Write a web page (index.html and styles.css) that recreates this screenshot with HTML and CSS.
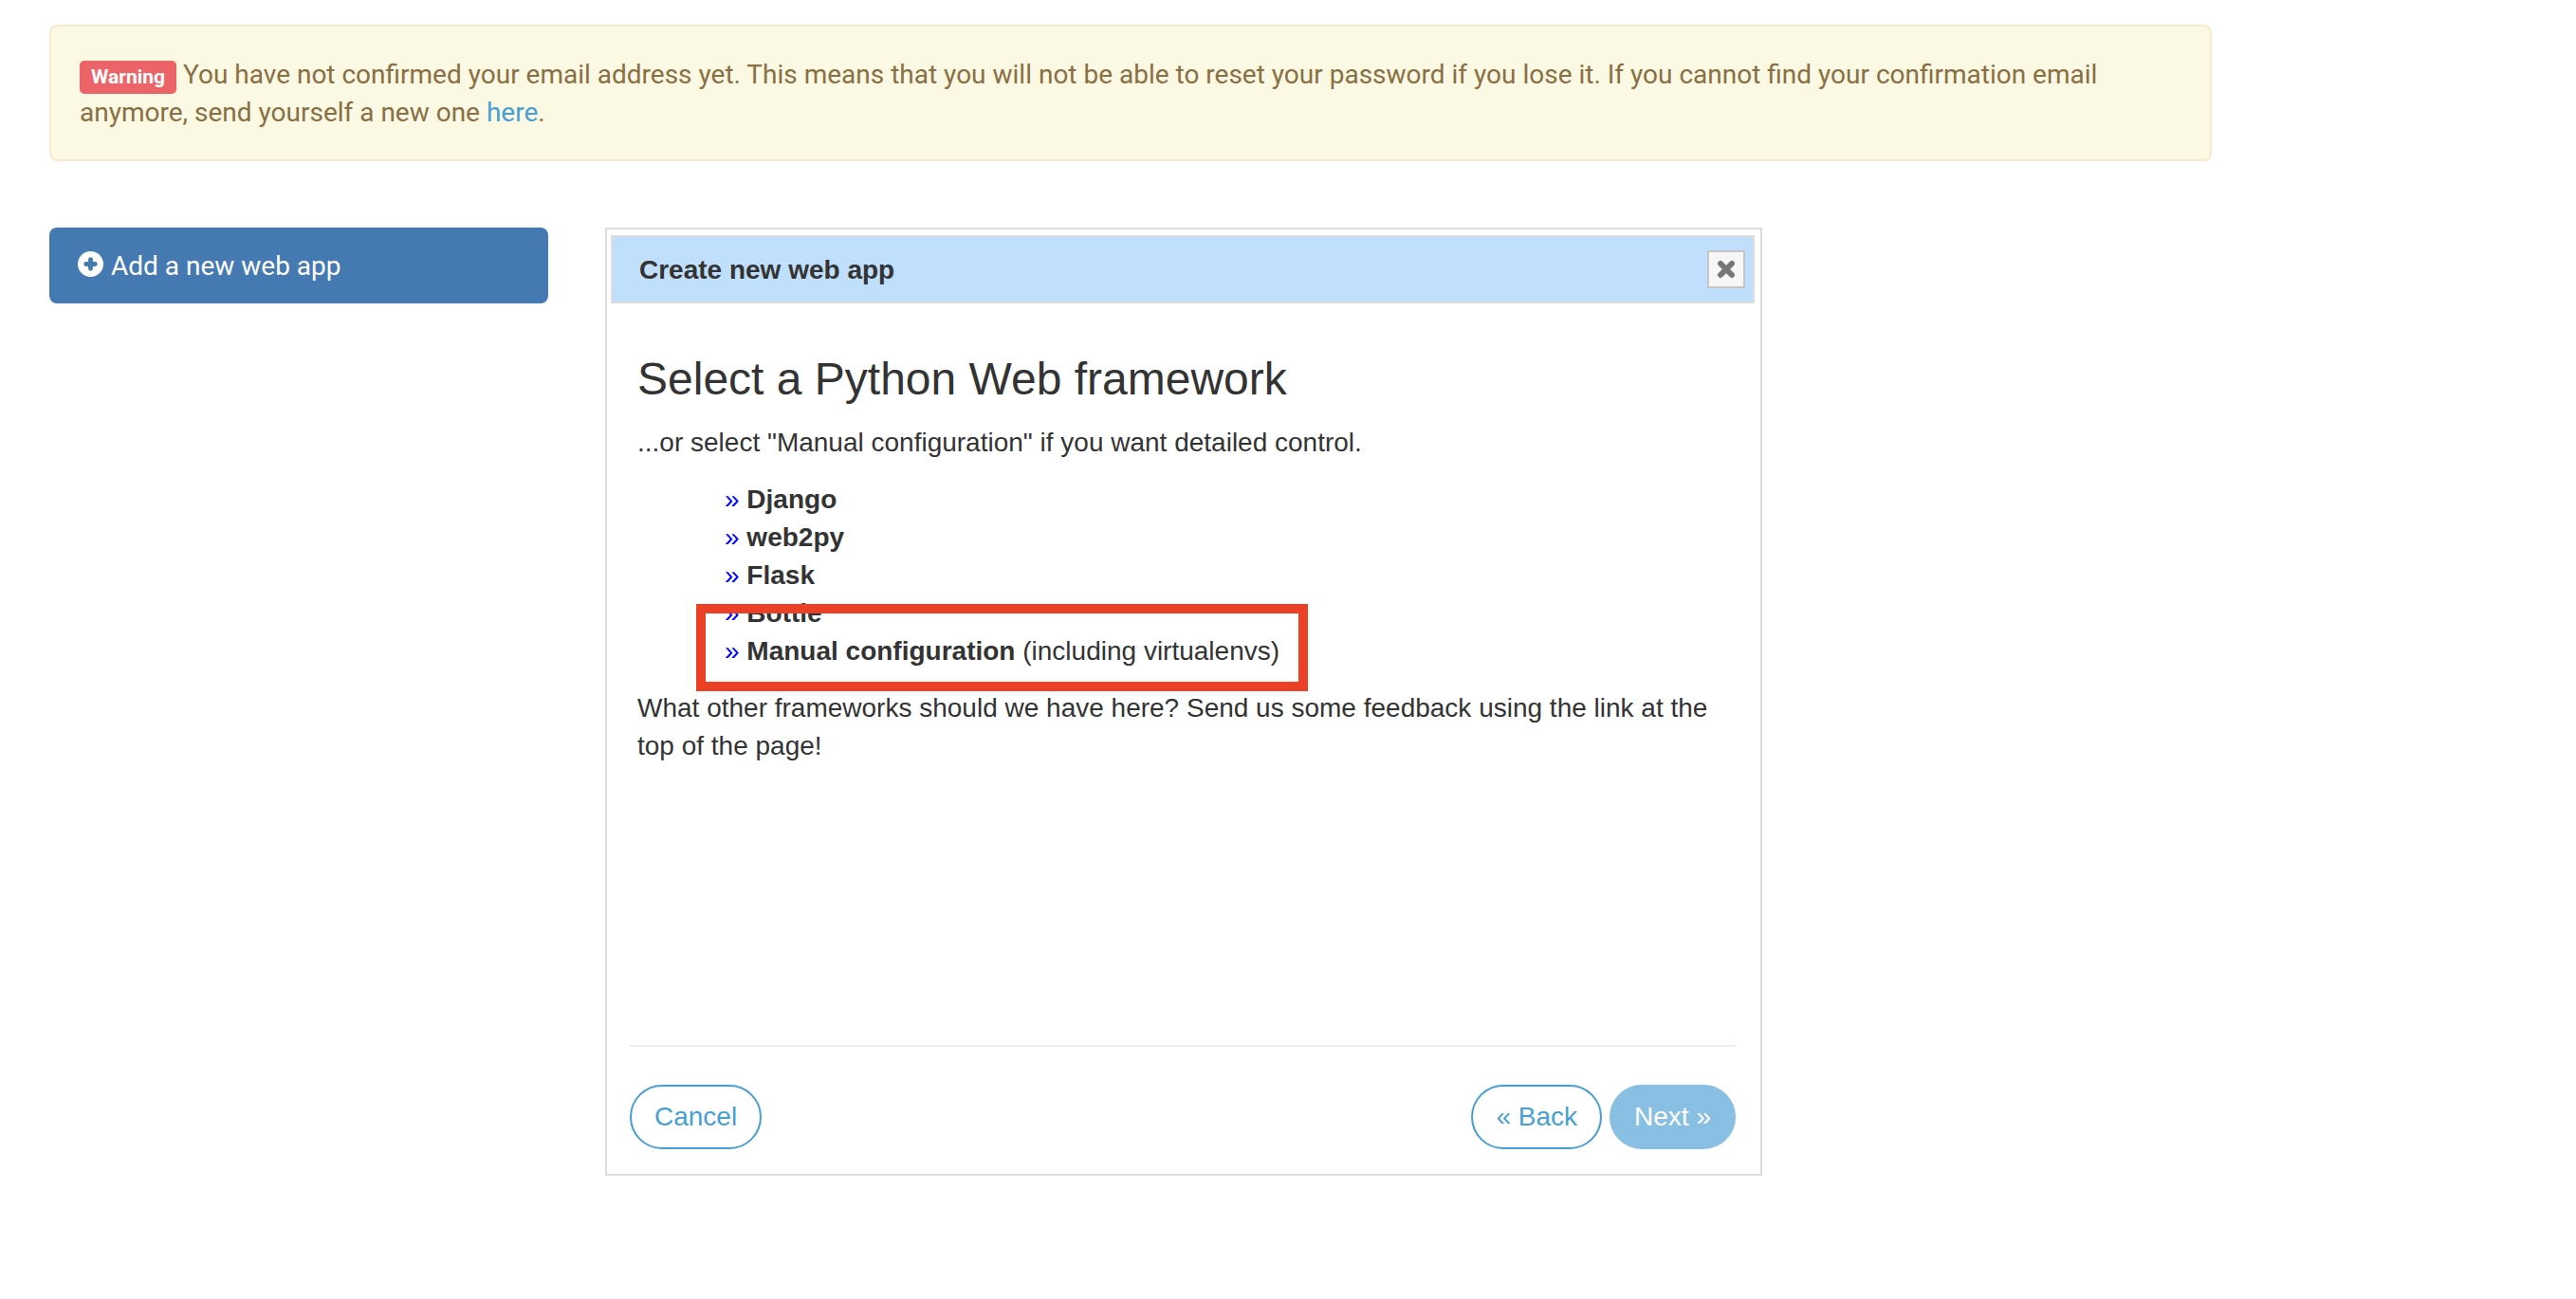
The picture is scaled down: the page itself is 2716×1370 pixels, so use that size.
FILE: index.html
```html
<!DOCTYPE html>
<html lang="en">
<head>
  <meta charset="utf-8">
  <title>Web apps</title>
  <link rel="stylesheet" href="styles.css">
</head>
<body>
  <main class="container">
    <div class="alert" role="alert">
      <span class="label">Warning</span>
      You have not confirmed your email address yet. This means that you will not be able to reset your password if you lose it. If you cannot find your confirmation email anymore, send yourself a new one <a class="alert-link" href="#confirm">here</a>.
    </div>

    <div class="columns">
      <nav class="sidebar">
        <a class="add-app" href="#new">
          <svg class="add-icon" viewBox="0 0 28 28" aria-hidden="true">
            <circle cx="14" cy="14" r="14" fill="#fff"/>
            <path d="M14 9V19M9 14H19" stroke="#4479b2" stroke-width="5" stroke-linecap="round"/>
          </svg>
          <span>Add a new web app</span>
        </a>
      </nav>

      <section class="dialog" role="dialog" aria-labelledby="dialog-title">
        <header class="titlebar">
          <span class="title" id="dialog-title">Create new web app</span>
          <button class="close" type="button" aria-label="Close">
            <svg class="close-icon" viewBox="0 0 20 20" aria-hidden="true">
              <path d="M4 4L16 16M16 4L4 16" stroke="#777" stroke-width="6" stroke-linecap="round"/>
            </svg>
          </button>
        </header>

        <div class="step">
          <h1 class="heading">Select a Python Web framework</h1>
          <p class="text">...or select "Manual configuration" if you want detailed control.</p>
          <ul class="frameworks">
            <li><a class="framework" href="#django"><span class="marker">»</span> <b>Django</b></a></li>
            <li><a class="framework" href="#web2py"><span class="marker">»</span> <b>web2py</b></a></li>
            <li><a class="framework" href="#flask"><span class="marker">»</span> <b>Flask</b></a></li>
            <li><a class="framework" href="#bottle"><span class="marker">»</span> <b>Bottle</b></a></li>
            <li><a class="framework highlighted" href="#manual"><span class="marker">»</span> <b>Manual configuration</b> (including virtualenvs)</a></li>
          </ul>
          <p class="text">What other frameworks should we have here? Send us some feedback using the link at the top of the page!</p>
        </div>

        <footer class="actions">
          <button class="btn" type="button">Cancel</button>
          <div class="steps">
            <button class="btn" type="button">« Back</button>
            <button class="btn btn-primary" type="button" disabled>Next »</button>
          </div>
        </footer>
      </section>
    </div>
  </main>
</body>
</html>
```
FILE: styles.css
```css
* {
  box-sizing: border-box;
}

body {
  margin: 0;
  background: #fff;
  color: #333;
  font: 28px/40px Roboto, sans-serif;
}

a {
  text-decoration: none;
}

.container {
  max-width: 2384px;
  padding: 26px 52px;
}

.alert {
  margin-bottom: 70px;
  padding: 31px 30px 29px;
  border: 2px solid #f7ebce;
  border-radius: 8px;
  background: #fbf8e4;
  color: #896f42;
}

.alert-link {
  color: #469fd4;
}

.label {
  padding: 5px 12px 6px;
  border-radius: 5px;
  background: #ed6468;
  color: #fff;
  font-size: 21px;
  font-weight: 700;
  line-height: 21px;
}

.columns {
  display: grid;
  grid-template-columns: minmax(360px, 526px) minmax(0, 1220px);
  gap: 60px;
  align-items: start;
}

.add-app {
  display: flex;
  align-items: center;
  gap: 8px;
  padding: 21px 30px 19px;
  border-radius: 8px;
  background: #4479b2;
  color: #fff;
}

.add-icon {
  width: 27px;
  height: 27px;
  margin-bottom: 6px;
}

.dialog {
  display: flex;
  flex-direction: column;
  min-height: 1000px;
  padding: 6px 6px 6px 4px;
  border: 2px solid #ddd;
  font-family: "Liberation Sans", Arial, sans-serif;
}

.titlebar {
  display: flex;
  align-items: center;
  justify-content: space-between;
  padding: 13px 8px 13px 28px;
  border: 2px solid #ddd;
  background: #c0dffd;
}

.title {
  padding-top: 2px;
  font-weight: 700;
}

.close {
  display: flex;
  align-items: center;
  justify-content: center;
  width: 40px;
  height: 40px;
  padding: 0;
  border: 2px solid #c5c5c5;
  background: #f6f6f6;
}

.close-icon {
  width: 20px;
  height: 20px;
}

.step {
  flex: 1;
  padding: 53px 28px 20px;
}

.heading {
  margin: 0 0 20px;
  font-size: 48px;
  font-weight: 400;
  line-height: 54px;
}

.text {
  margin: 0 0 20px;
}

.frameworks {
  margin: 0 0 20px;
  padding: 0 0 0 92px;
  list-style: none;
}

.framework {
  color: #333;
}

.marker {
  color: #00f;
}

.highlighted {
  display: inline-block;
  position: relative;
}

.highlighted::after {
  content: "";
  position: absolute;
  inset: -30px -30px -22px;
  border: 10px solid #eb4025;
  pointer-events: none;
}

.actions {
  display: flex;
  justify-content: space-between;
  margin: 0 20px 20px;
  padding-top: 40px;
  border-top: 2px solid #eee;
}

.steps {
  display: flex;
  gap: 8px;
}

.btn {
  padding: 12px 24px;
  border: 2px solid #469fd4;
  border-radius: 34px;
  background: #fff;
  color: #469fd4;
  font: inherit;
}

.btn-primary {
  border-color: #89bfe3;
  background: #89bfe3;
  color: #fff;
}
```
